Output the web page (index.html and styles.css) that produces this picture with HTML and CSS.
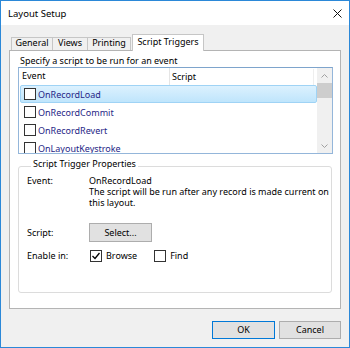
FILE: index.html
```html
<!DOCTYPE html>
<html lang="en">
<head>
    <meta charset="UTF-8">
    <title>Layout Setup</title>
    <link rel="stylesheet" href="styles.css">
</head>
<body>
    <div class="window">
        <div class="titlebar">
            <span class="title">Layout Setup</span>
            <svg class="close" width="9" height="9" viewBox="0 0 9 9">
                <path d="M0.5 0.5 L8.5 8.5 M8.5 0.5 L0.5 8.5" stroke="#111" stroke-width="1"/>
            </svg>
        </div>

        <div class="content">
            <div class="tabs">
                <div class="tab tab-general">General</div>
                <div class="tab tab-views">Views</div>
                <div class="tab tab-printing">Printing</div>
                <div class="tab active">Script Triggers</div>
            </div>

            <div class="panel">
                <div class="hint">Specify a script to be run for an event</div>

                <div class="listbox">
                    <div class="list-main">
                        <div class="list-header">
                            <div class="col-event">Event</div>
                            <div class="col-script">Script</div>
                        </div>
                        <div class="row selected"><span class="checkbox"></span>OnRecordLoad</div>
                        <div class="row"><span class="checkbox"></span>OnRecordCommit</div>
                        <div class="row"><span class="checkbox"></span>OnRecordRevert</div>
                        <div class="row"><span class="checkbox"></span>OnLayoutKeystroke</div>
                    </div>
                    <div class="scrollbar">
                        <div class="sb-arrow">
                            <svg width="7" height="4" viewBox="0 0 7 4"><polyline points="0.5,3.5 3.5,0.5 6.5,3.5" fill="none" stroke="#a0a0a0" stroke-width="1"/></svg>
                        </div>
                        <div class="sb-thumb"></div>
                        <div class="sb-track"></div>
                        <div class="sb-arrow">
                            <svg width="7" height="4" viewBox="0 0 7 4"><polyline points="0.5,0.5 3.5,3.5 6.5,0.5" fill="none" stroke="#a0a0a0" stroke-width="1"/></svg>
                        </div>
                    </div>
                </div>

                <fieldset class="props">
                    <legend>Script Trigger Properties</legend>
                    <div class="prop-row">
                        <div class="prop-label">Event:</div>
                        <div class="prop-value">OnRecordLoad<br>The script will be run after any record is made current on<br>this layout.</div>
                    </div>
                    <div class="prop-row script-row">
                        <div class="prop-label">Script:</div>
                        <button class="btn select-btn">Select...</button>
                    </div>
                    <div class="prop-row enable-row">
                        <div class="prop-label">Enable in:</div>
                        <span class="checkbox checked">
                            <svg width="10" height="10" viewBox="0 0 10 10"><polyline points="1.5,5 4,7.5 8.5,2" fill="none" stroke="#000" stroke-width="1.3"/></svg>
                        </span>
                        <span class="option">Browse</span>
                        <span class="checkbox"></span>
                        <span class="option">Find</span>
                    </div>
                </fieldset>
            </div>

            <div class="actions">
                <button class="btn ok-btn">OK</button>
                <button class="btn cancel-btn">Cancel</button>
            </div>
        </div>
    </div>
</body>
</html>
```
FILE: styles.css
```css
* {
    margin: 0;
    padding: 0;
    box-sizing: border-box;
}

body {
    font-family: "Noto Sans", "Liberation Sans", sans-serif;
    font-size: 9px;
    color: #000;
    background: #f0f0f0;
}

.window {
    width: 350px;
    height: 348px;
    border: 1px solid #2b88d8;
    background: #f0f0f0;
    display: flex;
    flex-direction: column;
}

/* title bar */
.titlebar {
    height: 24px;
    background: #fff;
    display: flex;
    align-items: center;
    justify-content: space-between;
    padding: 0 7px;
}

.title {
    font-size: 9.5px;
    line-height: 24px;
    padding-top: 1px;
}

.close {
    display: block;
    margin-top: 1px;
}

.content {
    padding: 9px 8px 0 8px;
}

/* tabs */
.tabs {
    display: flex;
    align-items: flex-end;
    padding-left: 2px;
}

.tab {
    height: 13px;
    border: 1px solid #c6c6c6;
    border-bottom: none;
    background: #f0f0f0;
    text-align: center;
    line-height: 10px;
    margin-left: -1px;
}

.tab-general {
    width: 42px;
    margin-left: 0;
}

.tab-views {
    width: 36px;
}

.tab-printing {
    width: 44px;
}

.tab.active {
    width: 72px;
    height: 17px;
    margin-left: 1px;
    margin-bottom: -1px;
    background: #fff;
    line-height: 12px;
    padding-top: 1px;
    position: relative;
    z-index: 1;
}

.panel {
    height: 259px;
    background: #fff;
    border: 1px solid #b4b4b4;
}

.hint {
    padding: 4px 0 0 10px;
    line-height: 12px;
}

/* event list */
.listbox {
    display: flex;
    height: 87px;
    margin: 0 7px 0 8px;
    border: 1px solid #94b6da;
    border-top-color: #7ea4cc;
    overflow: hidden;
}

.list-main {
    flex: 1;
    overflow: hidden;
}

.list-header {
    display: flex;
    height: 17px;
    align-items: center;
}

.col-event {
    width: 151px;
    height: 100%;
    padding-left: 3px;
    line-height: 16px;
    border-right: 1px solid #e5e5e5;
}

.col-script {
    flex: 1;
    padding-left: 2px;
    line-height: 16px;
    margin-right: 3px;
    border-right: 1px solid #eeeeee;
}

.row {
    display: flex;
    align-items: center;
    height: 18px;
    margin-left: 1px;
    padding-left: 3px;
    border: 1px solid transparent;
    color: #262686;
}

.row.selected {
    background: linear-gradient(#dcf1fe, #bfe5fc);
    border-color: #9fd3f5;
    border-radius: 2px;
}

.checkbox {
    display: inline-flex;
    align-items: center;
    justify-content: center;
    width: 12px;
    height: 12px;
    border: 1px solid #333;
    background: #fff;
    margin-right: 2px;
    flex-shrink: 0;
}

.scrollbar {
    width: 15px;
    background: #f0f0f0;
    display: flex;
    flex-direction: column;
}

.sb-arrow {
    height: 15px;
    display: flex;
    align-items: center;
    justify-content: center;
}

.sb-thumb {
    height: 15px;
    background: #cdcdcd;
}

.sb-track {
    flex: 1;
}

/* properties group */
.props {
    margin: 4px 8px 0 8px;
    border: 1px solid #dcdcdc;
    border-radius: 3px;
    padding: 0 0 30px 8px;
    min-width: 0;
}

.props legend {
    margin-left: 4px;
    padding: 0 2px 5px 2px;
    line-height: 12px;
}

.prop-row {
    display: flex;
    align-items: flex-start;
    line-height: 11px;
}

.prop-label {
    width: 62px;
    flex-shrink: 0;
}

.prop-value {
    white-space: nowrap;
}

.script-row {
    margin-top: 15px;
    align-items: center;
}

.enable-row {
    margin-top: 8px;
    align-items: center;
    line-height: 12px;
}

.enable-row .checkbox {
    margin-left: 1px;
    margin-right: 4px;
}

.option {
    margin-right: 16px;
}

/* buttons */
.btn {
    font-family: inherit;
    font-size: 9px;
    color: #000;
    background: #e1e1e1;
    border: 1px solid #adadad;
    height: 18px;
    line-height: 14px;
}

.select-btn {
    width: 63px;
    height: 19px;
}

.actions {
    display: flex;
    justify-content: flex-end;
    gap: 4px;
    margin-top: 12px;
}

.ok-btn {
    width: 63px;
    border-color: #0078d7;
}

.cancel-btn {
    width: 62px;
}
```
